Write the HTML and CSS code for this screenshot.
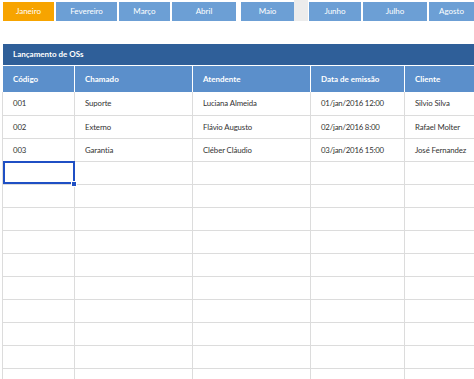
FILE: index.html
```html
<!DOCTYPE html>
<html lang="pt-BR">
<head>
    <meta charset="UTF-8" />
    <title>Lançamento de OSs</title>
    <link rel="stylesheet" href="styles.css">
</head>
<body>
    <nav class="tabs">
        <span class="tab active w51">Janeiro</span>
        <span class="tab w61">Fevereiro</span>
        <span class="tab w51">Março</span>
        <span class="tab w64">Abril</span>
        <span class="tab w53 gap-left">Maio</span>
        <span class="tab-spacer"></span>
        <span class="tab w52">Junho</span>
        <span class="tab w64">Julho</span>
        <span class="tab w45">Agosto</span>
    </nav>

    <div class="band">Lançamento de OSs</div>

    <table class="grid">
        <colgroup>
            <col class="c1"><col class="c2"><col class="c3"><col class="c4"><col class="c5">
        </colgroup>
        <thead>
            <tr>
                <th>Código</th>
                <th>Chamado</th>
                <th>Atendente</th>
                <th>Data de emissão</th>
                <th>Cliente</th>
            </tr>
        </thead>
        <tbody>
            <tr><td>001</td><td>Suporte</td><td>Luciana Almeida</td><td class="date">01/jan/2016 12:00</td><td>Silvio Silva</td></tr>
            <tr><td>002</td><td>Externo</td><td>Flávio Augusto</td><td class="date">02/jan/2016 8:00</td><td>Rafael Molter</td></tr>
            <tr><td>003</td><td>Garantia</td><td>Cléber Cláudio</td><td class="date">03/jan/2016 15:00</td><td>José Fernandez</td></tr>
            <tr><td class="selected"><span class="handle"></span></td><td></td><td></td><td></td><td></td></tr>
            <tr><td></td><td></td><td></td><td></td><td></td></tr>
            <tr><td></td><td></td><td></td><td></td><td></td></tr>
            <tr><td></td><td></td><td></td><td></td><td></td></tr>
            <tr><td></td><td></td><td></td><td></td><td></td></tr>
            <tr><td></td><td></td><td></td><td></td><td></td></tr>
            <tr><td></td><td></td><td></td><td></td><td></td></tr>
            <tr><td></td><td></td><td></td><td></td><td></td></tr>
            <tr><td></td><td></td><td></td><td></td><td></td></tr>
            <tr><td></td><td></td><td></td><td></td><td></td></tr>
        </tbody>
    </table>
</body>
</html>
```

FILE: styles.css
```css
body {
    margin: 0;
    padding: 0;
    background-color: #ffffff;
    font-family: Lato, 'Liberation Sans', sans-serif;
    color: #333;
    overflow: hidden;
    width: 474px;
    height: 379px;
}

/* abas dos meses */
.tabs {
    display: flex;
    gap: 2px;
    padding: 2px 0 0 3px;
    height: 19px;
    overflow: hidden;
}

.tab {
    flex: none;
    height: 19px;
    line-height: 19px;
    background-color: #6c9fd5;
    color: #ffffff;
    font-size: 8px;
    text-align: center;
}

.tab.active {
    background-color: #f7a400;
}

.gap-left {
    margin-left: 3px;
}

.tab-spacer {
    flex: none;
    width: 14px;
    height: 21px;
    margin: -2px -1px 0 -2px;
    background-color: #ececec;
}

.w45 { width: 45px; }
.w51 { width: 51px; }
.w52 { width: 52px; }
.w53 { width: 53px; }
.w61 { width: 61px; }
.w64 { width: 64px; }

/* faixa de título */
.band {
    margin: 23px 0 1px 3px;
    height: 21px;
    line-height: 21px;
    padding-left: 10px;
    background-color: #2f5f99;
    color: #ffffff;
    font-size: 8px;
    font-weight: bold;
}

.grid {
    margin-left: 2px;
    border-collapse: collapse;
    table-layout: fixed;
    width: 490px;
}

.c1 { width: 72px; }
.c2 { width: 118px; }
.c3 { width: 118px; }
.c4 { width: 94px; }
.c5 { width: 88px; }

.grid th {
    height: 26px;
    padding: 0 0 0 10px;
    background-color: #5b8fcb;
    border-left: 1px solid #ffffff;
    border-right: 1px solid #ffffff;
    color: #ffffff;
    font-size: 8px;
    font-weight: bold;
    text-align: left;
    box-sizing: border-box;
}

.grid td {
    height: 23px;
    padding: 0 0 0 10px;
    border-right: 1px solid #dcdcdc;
    border-bottom: 1px solid #dcdcdc;
    font-size: 7.8px;
    letter-spacing: -0.1px;
    color: #333;
    white-space: nowrap;
    box-sizing: border-box;
}

.grid td.date {
    letter-spacing: -0.2px;
}

.grid td:first-child {
    border-left: 1px solid #dcdcdc;
}

.grid td.selected {
    position: relative;
    outline: 2px solid #1f4fc4;
    outline-offset: -2px;
}

.handle {
    position: absolute;
    right: -3px;
    bottom: -3px;
    width: 4px;
    height: 4px;
    background-color: #1f4fc4;
    border: 1px solid #ffffff;
}
```
